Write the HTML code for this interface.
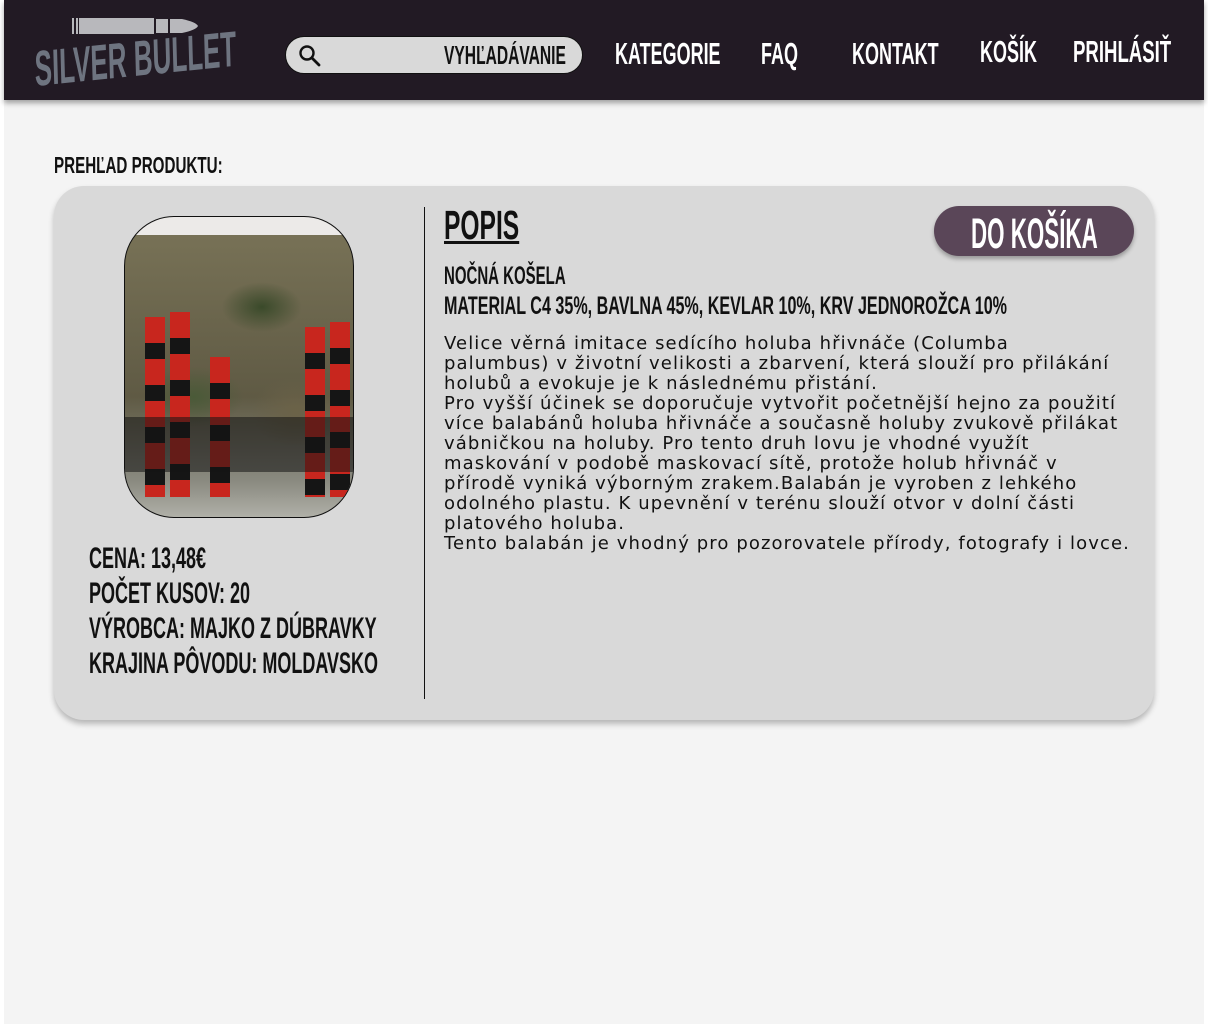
<!DOCTYPE html>
<html><head><meta charset="utf-8"><style>
*{margin:0;padding:0;box-sizing:border-box}
html,body{width:1208px;height:1024px;background:#fff;overflow:hidden}
#page{position:absolute;left:4px;top:0;width:1200px;height:1024px;background:#f4f4f4}
#hdr{position:absolute;left:4px;top:0;width:1200px;height:100px;background:#221a24;box-shadow:0 3px 5px rgba(0,0,0,.35)}
.c{position:absolute;font-family:"Liberation Sans",sans-serif;font-weight:bold;line-height:1;white-space:nowrap;transform:scaleX(.6);transform-origin:0 0;color:#111}
.w{color:#fff}
#card{position:absolute;left:54px;top:186px;width:1100px;height:534px;background:#d9d9d9;border-radius:30px;box-shadow:0 4px 6px rgba(0,0,0,.25)}
#vl{position:absolute;left:424px;top:207px;width:1px;height:492px;background:#111}
#img{position:absolute;left:124px;top:216px;width:230px;height:302px;border:1.5px solid #111;border-radius:50px;overflow:hidden;
background:linear-gradient(180deg,#eceae8 0 6%,transparent 6%),
radial-gradient(ellipse 40px 25px at 60% 30%,#3a4a2a,transparent),
radial-gradient(ellipse 50px 30px at 30% 60%,#4a5a38,transparent),
radial-gradient(ellipse 45px 35px at 75% 65%,#6b6248,transparent),
linear-gradient(180deg,#7a7458,#5f5a44 60%,#8a8a80 88%,#b0b0a8)}
.bar{position:absolute;width:20px;background:repeating-linear-gradient(180deg,#c8261e 0 26px,#151515 26px 42px)}
#btn{position:absolute;left:934px;top:206px;width:200px;height:50px;border-radius:25px;background:#5a4658;box-shadow:0 3px 4px rgba(0,0,0,.3)}
#srch{position:absolute;left:285px;top:36px;width:298px;height:38px;border-radius:19px;background:#d9d9d9;border:1.5px solid #111}
#para{position:absolute;left:444px;top:334px;white-space:nowrap;font-family:"DejaVu Sans",sans-serif;font-size:18px;line-height:20px;letter-spacing:1.1px;color:#111}
</style></head><body>
<div id="page"></div>
<div id="hdr">
 <svg style="position:absolute;left:66px;top:16px" width="130" height="22"><rect x="2" y="2" width="2" height="16" fill="#b8b8bc"/><rect x="6" y="2" width="2" height="16" fill="#b8b8bc"/><rect x="9" y="2" width="75" height="16" fill="#b8b8bc"/><rect x="86" y="3" width="12" height="14" fill="#b8b8bc"/><path d="M100 3 H112 Q126 6 128 10 Q126 14 112 17 H100Z" fill="#b8b8bc"/></svg>
</div>
<div class="c" style="left:34px;top:44px;font-size:50px;color:#6e7480;transform:scaleX(.52) rotate(-3deg)">SILVER BULLET</div>
<div id="srch"></div>
<svg style="position:absolute;left:298px;top:44px" width="24" height="24"><circle cx="9" cy="9" r="6.5" fill="none" stroke="#111" stroke-width="2.4"/><path d="M14 14 L21 21" stroke="#111" stroke-width="2.8" stroke-linecap="round"/></svg>
<div class="c" style="left:444px;top:42px;font-size:26px;transform:scaleX(.6)">VYHĽADÁVANIE</div>
<div class="c w" style="left:615px;top:38px;font-size:31px;transform:scaleX(.58)">KATEGORIE</div>
<div class="c w" style="left:761px;top:38px;font-size:31px;transform:scaleX(.58)">FAQ</div>
<div class="c w" style="left:852px;top:38px;font-size:31px;transform:scaleX(.58)">KONTAKT</div>
<div class="c w" style="left:980px;top:36px;font-size:31px;transform:scaleX(.58)">KOŠÍK</div>
<div class="c w" style="left:1073px;top:36px;font-size:31px;transform:scaleX(.6)">PRIHLÁSIŤ</div>

<div class="c" style="left:54px;top:154px;font-size:23px;transform:scaleX(.66)">PREHĽAD PRODUKTU:</div>
<div id="card"></div>
<div id="img">
 <div class="bar" style="left:20px;top:100px;height:180px"></div>
 <div class="bar" style="left:45px;top:95px;height:185px"></div>
 <div class="bar" style="left:85px;top:140px;height:140px"></div>
 <div class="bar" style="left:180px;top:110px;height:170px"></div>
 <div class="bar" style="left:205px;top:105px;height:175px"></div>
 <div style="position:absolute;left:0;top:200px;width:100%;height:55px;background:rgba(20,20,20,.55)"></div>
</div>
<div id="vl"></div>
<div class="c" style="left:444px;top:205px;font-size:41px;text-decoration:underline;text-decoration-thickness:3px;transform:scaleX(.6)">POPIS</div>
<div id="btn"></div>
<div class="c w" style="left:971px;top:213px;font-size:43px;transform:scaleX(.52)">DO KOŠÍKA</div>
<div class="c" style="left:444px;top:264px;font-size:25px;transform:scaleX(.6)">NOČNÁ KOŠELA</div>
<div class="c" style="left:444px;top:294px;font-size:25px;transform:scaleX(.645)">MATERIAL C4 35%, BAVLNA 45%, KEVLAR 10%, KRV JEDNOROŽCA 10%</div>
<div id="para">Velice věrná imitace sedícího holuba hřivnáče (Columba<br>palumbus) v životní velikosti a zbarvení, která slouží pro přilákání<br>holubů a evokuje je k následnému přistání.<br>Pro vyšší účinek se doporučuje vytvořit početnější hejno za použití<br>více balabánů holuba hřivnáče a současně holuby zvukově přilákat<br>vábničkou na holuby. Pro tento druh lovu je vhodné využít<br>maskování v podobě maskovací sítě, protože holub hřivnáč v<br>přírodě vyniká výborným zrakem.Balabán je vyroben z lehkého<br>odolného plastu. K upevnění v terénu slouží otvor v dolní části<br>platového holuba.<br>Tento balabán je vhodný pro pozorovatele přírody, fotografy i lovce.</div>
<div class="c" style="left:89px;top:544px;font-size:30px">CENA: 13,48€</div>
<div class="c" style="left:89px;top:579px;font-size:30px">POČET KUSOV: 20</div>
<div class="c" style="left:89px;top:614px;font-size:30px">VÝROBCA: MAJKO Z DÚBRAVKY</div>
<div class="c" style="left:89px;top:649px;font-size:30px">KRAJINA PÔVODU: MOLDAVSKO</div>
</body></html>
